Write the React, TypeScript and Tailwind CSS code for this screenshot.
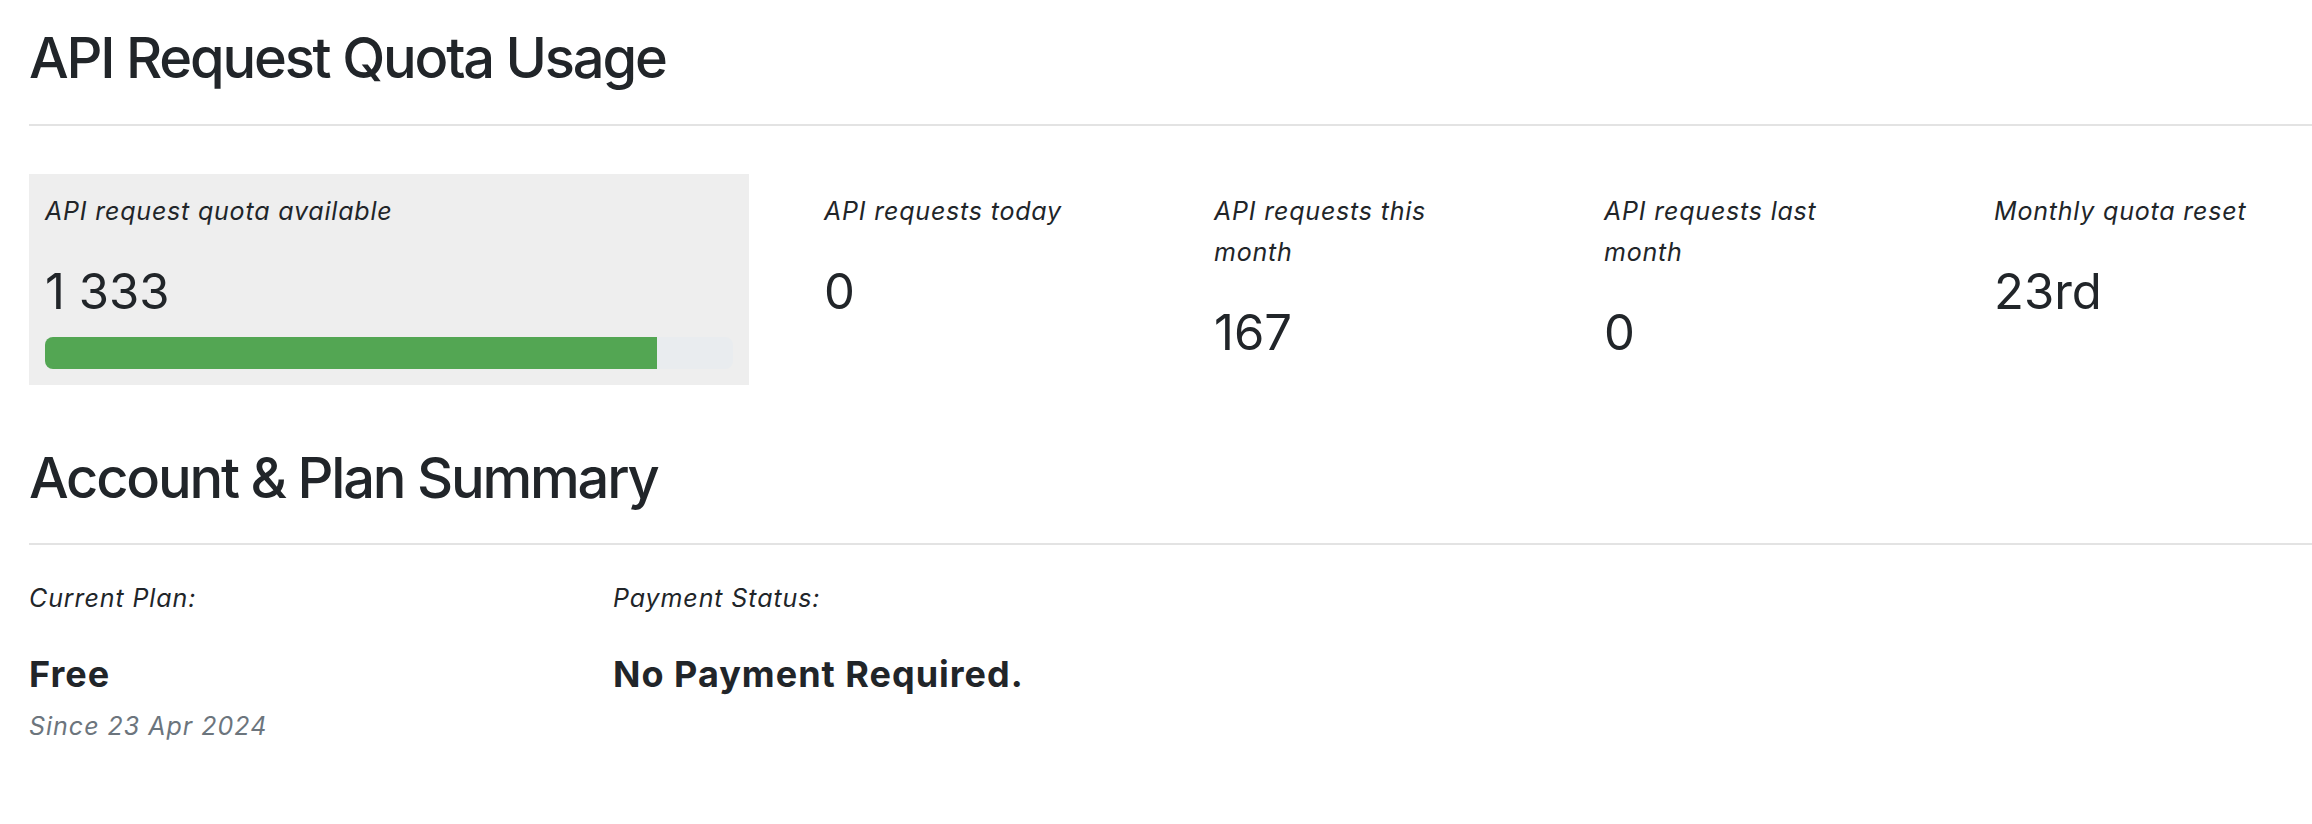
import React from "react";

function StatCol({ label, value }: { label: string; value: string }) {
  return (
    <div className="w-[390px] shrink-0 pl-[16px] pr-[90px] pt-[17px]">
      <div className="italic text-[25px] leading-[41px] tracking-[0.8px] text-[#212529]">{label}</div>
      <div className="mt-[31px] text-[49px] leading-[1.2] text-[#212529]">{value}</div>
    </div>
  );
}

export default function App() {
  return (
    <div className="min-h-[824px] overflow-hidden bg-white font-['Inter','Noto_Sans',sans-serif] text-[#212529]">
      <div className="pl-[29px] pt-[25px]">
        <h2 className="text-[56px] leading-[1.2] font-medium tracking-[-2.2px]">API Request Quota Usage</h2>
        <div className="mt-[32px] h-[2px] bg-[#e3e3e3]" />

        <div className="mt-[48px] flex">
          <div className="w-[720px] shrink-0 bg-[#eeeeee] px-[16px] pt-[17px] pb-[16px]">
            <div className="italic text-[25px] leading-[41px] tracking-[0.8px]">API request quota available</div>
            <div className="mt-[31px] text-[49px] leading-[1.2]">1 333</div>
            <div className="mt-[15px] h-[32px] w-full overflow-hidden rounded-[8px] bg-[#e9ecef]">
              <div className="h-full bg-[#53a653]" style={{ width: "89%" }} />
            </div>
          </div>
          <div className="ml-[59px] flex shrink-0">
            <StatCol label="API requests today" value="0" />
            <StatCol label="API requests this month" value="167" />
            <StatCol label="API requests last month" value="0" />
            <StatCol label="Monthly quota reset" value="23rd" />
          </div>
        </div>

        <h2 className="mt-[60px] text-[56px] leading-[1.2] font-medium tracking-[-2.2px]">Account &amp; Plan Summary</h2>
        <div className="mt-[31px] h-[2px] bg-[#e3e3e3]" />

        <div className="mt-[33px] flex">
          <div className="w-[584px] shrink-0">
            <div className="italic text-[25px] leading-[41px] tracking-[0.9px]">Current Plan:</div>
            <div className="mt-[34px] text-[36px] leading-[1.2] font-bold tracking-[1px]">Free</div>
            <div className="mt-[10px] italic text-[25px] leading-[41px] tracking-[1px] text-[#6c757d]">Since 23 Apr 2024</div>
          </div>
          <div>
            <div className="italic text-[25px] leading-[41px] tracking-[0.9px]">Payment Status:</div>
            <div className="mt-[34px] text-[36px] leading-[1.2] font-bold tracking-[1px]">No Payment Required.</div>
          </div>
        </div>
      </div>
    </div>
  );
}
